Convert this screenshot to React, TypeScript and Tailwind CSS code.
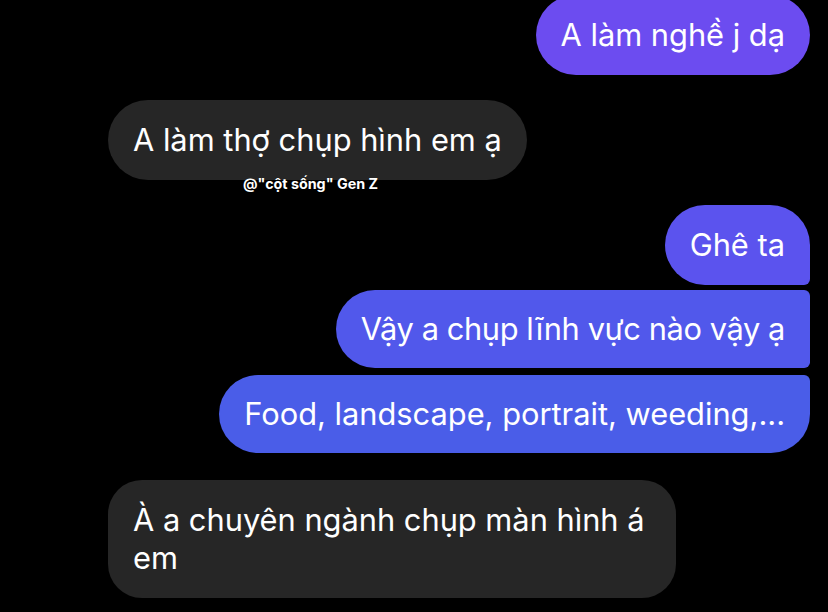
import React from 'react';

const font = { fontFamily: 'Inter, "Noto Sans", sans-serif' };

const App: React.FC = () => {
  return (
    <div className="w-[828px] h-[612px] bg-black overflow-hidden" style={font}>
      <div className="flex flex-col pl-[108px] pr-[18px] text-[30.8px] leading-[38px] text-white">
        <div className="self-end -mt-[5px] rounded-full bg-[#6c4cf0] px-[25px] py-[21px]">
          A làm nghề j dạ
        </div>

        <div className="relative self-start mt-[25px]">
          <div className="rounded-full bg-[#262626] px-[25px] py-[21px]">A làm thợ chụp hình em ạ</div>
          <span className="absolute left-[135px] top-[75px] text-[14.3px] leading-[17px] font-bold text-white whitespace-nowrap">
            @"cột sống" Gen Z
          </span>
        </div>

        <div className="self-end mt-[25px] rounded-[40px] rounded-br-[6px] bg-[#5b53ee] px-[25px] py-[21px]">
          Ghê ta
        </div>
        <div className="self-end mt-[5px] rounded-l-[40px] rounded-r-[6px] bg-[#5158eb] px-[25px] py-[20px] tracking-[-0.4px]">
          Vậy a chụp lĩnh vực nào vậy ạ
        </div>
        <div className="self-end mt-[7px] rounded-[40px] rounded-tr-[6px] bg-[#4a5de8] px-[25px] py-[20px]">
          Food, landscape, portrait, weeding,...
        </div>

        <div className="self-start mt-[27px] w-[568px] rounded-[34px] bg-[#262626] px-[25px] py-[21px]">
          À a chuyên ngành chụp màn hình á em
        </div>
      </div>
    </div>
  );
};

export default App;
